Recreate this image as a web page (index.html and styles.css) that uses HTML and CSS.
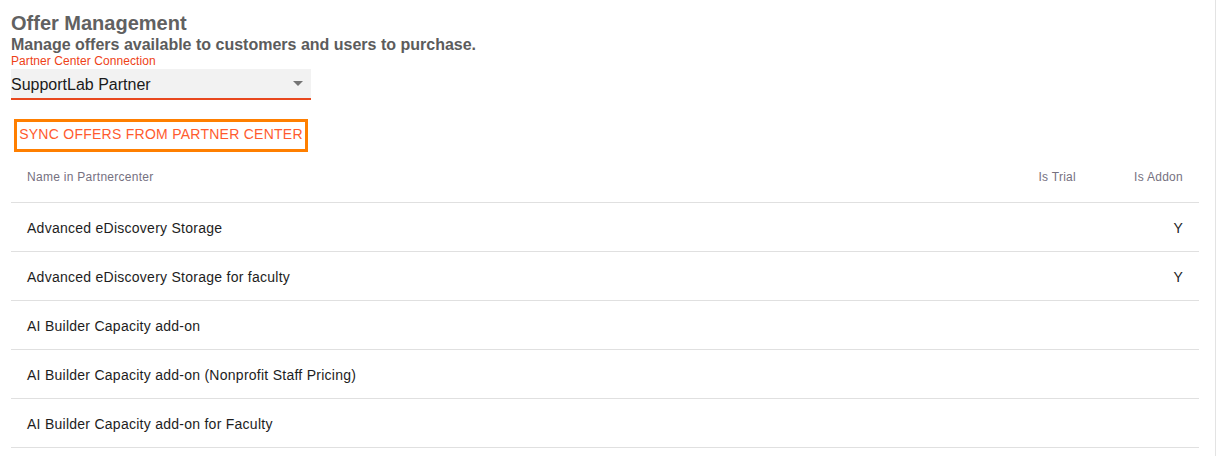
FILE: index.html
```html
<!DOCTYPE html>
<html>
<head>
<meta charset="utf-8">
<link rel="stylesheet" href="styles.css">
</head>
<body>
<div class="page">
  <h1 class="title">Offer Management</h1>
  <h2 class="subtitle">Manage offers available to customers and users to purchase.</h2>
  <div class="field">
    <label class="field-label">Partner Center Connection</label>
    <div class="select">
      <span class="select-value">SupportLab Partner</span>
      <svg class="caret" width="10" height="5" viewBox="0 0 10 5"><path d="M0 0 L10 0 L5 5 Z" fill="#757575"/></svg>
    </div>
  </div>
  <button class="sync-btn">SYNC OFFERS FROM PARTNER CENTER</button>
  <table class="offers">
    <thead>
      <tr><th class="col-name">Name in Partnercenter</th><th class="col-trial">Is Trial</th><th class="col-addon">Is Addon</th></tr>
    </thead>
    <tbody>
      <tr><td>Advanced eDiscovery Storage</td><td class="num"></td><td class="num">Y</td></tr>
      <tr><td>Advanced eDiscovery Storage for faculty</td><td class="num"></td><td class="num">Y</td></tr>
      <tr><td>AI Builder Capacity add-on</td><td class="num"></td><td class="num"></td></tr>
      <tr><td>AI Builder Capacity add-on (Nonprofit Staff Pricing)</td><td class="num"></td><td class="num"></td></tr>
      <tr><td>AI Builder Capacity add-on for Faculty</td><td class="num"></td><td class="num"></td></tr>
    </tbody>
  </table>
</div>
</body>
</html>
```
FILE: styles.css
```css
html, body {
  margin: 0;
  padding: 0;
  background: #fff;
  font-family: "Liberation Sans", Arial, sans-serif;
  overflow: hidden;
}
body {
  height: 456px;
  border-right: 1px solid #e3e3e3;
  box-sizing: border-box;
}
.page {
  padding: 12px 16px 0 11px;
  width: 1188px;
}
.title {
  margin: 0;
  font-size: 20px;
  line-height: 23px;
  font-weight: bold;
  color: #616161;
}
.subtitle {
  margin: 0;
  font-size: 16px;
  line-height: 19px;
  font-weight: bold;
  color: #5c5c5c;
}
.field {
  width: 300px;
}
.field-label {
  display: block;
  font-size: 12px;
  line-height: 14px;
  color: #ee4117;
  letter-spacing: 0.08px;
}
.select {
  margin-top: 1px;
  height: 27px;
  background: #f2f2f2;
  border-bottom: 2px solid #e8481e;
  display: flex;
  align-items: center;
  justify-content: space-between;
  padding: 2px 8px 0 0;
}
.select-value {
  font-size: 16px;
  color: #1a1a1a;
}
.caret {
  margin-bottom: 3px;
}
.sync-btn {
  display: block;
  margin: 19px 0 0 3px;
  width: 294px;
  height: 33px;
  border: 3px solid #ff7f00;
  background: #fff;
  color: #ff5b2e;
  font-family: "Liberation Sans", Arial, sans-serif;
  font-size: 14px;
  letter-spacing: 0.26px;
  padding: 0 0 4px 0;
  text-align: center;
}
.offers {
  width: 1188px;
  border-collapse: collapse;
  margin-top: 0;
}
.offers th {
  font-size: 12px;
  font-weight: normal;
  color: #76717f;
  letter-spacing: 0.28px;
  height: 50px;
  padding: 0 16px;
  border-bottom: 1px solid #e0e0e0;
  text-align: left;
}
.offers th.col-trial, .offers th.col-addon {
  text-align: right;
}
.offers th.col-trial { width: 60px; }
.offers th.col-addon { width: 75px; }
.offers td {
  font-size: 14px;
  letter-spacing: 0.26px;
  color: #1d1d1d;
  height: 47px;
  padding: 1px 16px 0;
  border-bottom: 1px solid #e0e0e0;
}
.offers td.num {
  text-align: right;
}
```
